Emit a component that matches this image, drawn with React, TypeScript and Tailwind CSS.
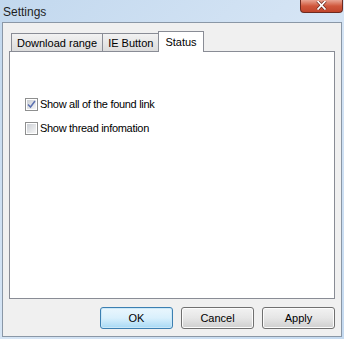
import React from 'react';

const font = { fontFamily: '"Liberation Sans", Arial, sans-serif' };

function Checkbox({ checked }: { checked?: boolean }) {
    return (
        <div className="w-[13px] h-[13px] border border-[#8e8f8f] bg-white p-[1px] shrink-0">
            <div className="w-full h-full bg-gradient-to-br from-[#cbcfd5] to-[#f6f6f6] flex items-center justify-center">
                {checked && (
                    <svg width="9" height="9" viewBox="0 0 9 9">
                        <path d="M1 4.5 L3.5 7 L8 1" fill="none" stroke="#5b70b0" strokeWidth="1.5" />
                    </svg>
                )}
            </div>
        </div>
    );
}

function Button({ label, primary }: { label: string; primary?: boolean }) {
    return (
        <div
            className={
                'w-[73px] h-[22px] rounded-[3px] border flex items-center justify-center text-[11px] text-black ' +
                (primary
                    ? 'border-[#3c7fb1] bg-gradient-to-b from-[#eaf6fd] via-[#d9f0fc] to-[#a7d9f5] shadow-[inset_0_0_0_1px_#cbe8f8]'
                    : 'border-[#707070] bg-gradient-to-b from-[#f2f2f2] via-[#e6e6e6] to-[#cfcfcf] shadow-[inset_0_0_0_1px_#fcfcfc]')
            }
        >
            {label}
        </div>
    );
}

function Tab({ label, active }: { label: string; active?: boolean }) {
    return active ? (
        <div className="h-[21px] -mb-[1px] px-[6px] pt-[2px] border border-b-0 border-[#898c95] bg-white text-[11px] text-black relative z-10 -ml-[1px]">
            {label}
        </div>
    ) : (
        <div className="h-[18px] px-[5px] border border-b-0 border-[#898c95] bg-gradient-to-b from-[#f2f2f2] to-[#dcdcdc] text-[11px] leading-[19px] text-black">
            {label}
        </div>
    );
}

export default function App() {
    return (
        <div style={font} className="w-[344px] h-[339px] bg-gradient-to-br from-[#c2d8ee] via-[#d6e5f5] to-[#c5daf0] flex flex-col overflow-hidden">
            <div className="h-[22px] flex items-start justify-between pl-[3px] pr-[1px]">
                <span className="text-[12px] text-[#1e1e1e] mt-[3px]">Settings</span>
                <div className="w-[43px] h-[13px] rounded-b-[4px] border border-t-0 border-[#6d2a20] bg-gradient-to-b from-[#e8a493] via-[#d0573c] to-[#c0452c] flex items-start justify-center">
                    <svg width="11" height="9" viewBox="0 0 11 9" className="mt-[1px]">
                        <path d="M1.5 0 L9.5 8.5 M9.5 0 L1.5 8.5" stroke="#6d2a20" strokeWidth="3.2" />
                        <path d="M1.5 0 L9.5 8.5 M9.5 0 L1.5 8.5" stroke="#ffffff" strokeWidth="1.8" />
                    </svg>
                </div>
            </div>
            <div className="mx-[2px] w-[340px] h-[315px] border border-[#8a97a6] bg-[#f0f0f0] px-[6px] pt-[7px] flex flex-col">
                <div className="h-[21px] flex items-end pl-[2px]">
                    <Tab label="Download range" />
                    <div className="-ml-[1px]"><Tab label="IE Button" /></div>
                    <Tab label="Status" active />
                </div>
                <div className="h-[248px] border border-[#898c95] bg-white pl-[15px] pt-[46px] flex flex-col gap-[11px] text-[11px] tracking-[-0.3px] text-black">
                    <div className="flex items-center gap-[2px] h-[13px]">
                        <Checkbox checked />
                        <span>Show all of the found link</span>
                    </div>
                    <div className="flex items-center gap-[2px] h-[13px]">
                        <Checkbox />
                        <span>Show thread infomation</span>
                    </div>
                </div>
                <div className="flex justify-end gap-[8px] mt-[8px]">
                    <Button label="OK" primary />
                    <Button label="Cancel" />
                    <Button label="Apply" />
                </div>
            </div>
        </div>
    );
}
